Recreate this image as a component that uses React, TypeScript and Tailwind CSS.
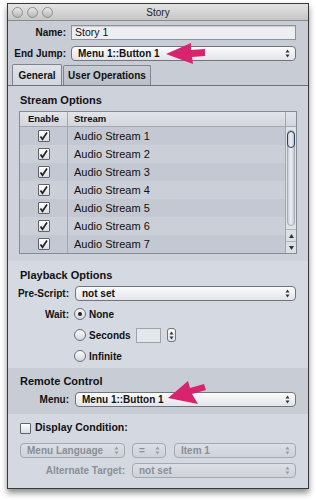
import React from "react";

const F = { fontFamily: '"Liberation Sans", Arial, sans-serif' };

function UpDown({ color = "#333" }: { color?: string }) {
  return (
    <svg width="5" height="9" viewBox="0 0 5 9" className="shrink-0">
      <polygon points="2.5,0.5 4.5,3.5 0.5,3.5" fill={color} />
      <polygon points="2.5,8.5 4.5,5.5 0.5,5.5" fill={color} />
    </svg>
  );
}

function Popup({ text, disabled, className }: { text: string; disabled?: boolean; className?: string }) {
  return (
    <div
      className={
        "h-[15px] rounded-[4px] border flex items-center pl-[6px] pr-[5px] justify-between bg-gradient-to-b " +
        (disabled
          ? "border-[#a4a8b0] from-[#dcdfe5] to-[#ced2d9] text-[#8b8f97] font-normal "
          : "border-[#6f747d] from-[#fbfbfc] to-[#e3e5ea] text-[#111] font-bold ") +
        (className || "")
      }
    >
      <span className={"text-[10px] leading-none " + (disabled ? "font-bold" : "")}>{text}</span>
      <UpDown color={disabled ? "#9a9ea6" : "#333"} />
    </div>
  );
}

function Check({ checked }: { checked?: boolean }) {
  return (
    <div className="w-[12px] h-[12px] border border-[#5f636b] bg-gradient-to-b from-[#ffffff] to-[#d9dce2] rounded-[1px] flex items-center justify-center">
      {checked && (
        <svg width="9" height="9" viewBox="0 0 9 9">
          <path d="M1.5 4.5 L3.5 7.2 L8 0.5" stroke="#222" strokeWidth="1.7" fill="none" />
        </svg>
      )}
    </div>
  );
}

function Radio({ on }: { on?: boolean }) {
  return (
    <div className="w-[12px] h-[12px] rounded-full border border-[#6b7079] bg-gradient-to-b from-[#fdfdfd] to-[#d3d6dc] flex items-center justify-center">
      {on && <div className="w-[4px] h-[4px] rounded-full bg-[#222]" />}
    </div>
  );
}

function Light() {
  return <div className="w-[11px] h-[11px] rounded-full border border-[#8e8e8e] bg-gradient-to-b from-[#e8e8e8] to-[#b7b7b7]" />;
}

export default function App() {
  const streams = [1, 2, 3, 4, 5, 6, 7];
  return (
    <div className="relative w-[316px] h-[500px] bg-white overflow-hidden" style={F}>
      <div className="ml-[7px] mt-[3px] w-[302px] border border-[#3a3a3a] shadow-[0_4px_6px_rgba(0,0,0,0.45)] text-[#111]">
        {/* title bar */}
        <div className="relative h-[17px] bg-gradient-to-b from-[#e4e4e4] to-[#c6c6c6] border-b border-[#8a8a8a] flex items-center">
          <div className="flex gap-[4px] pl-[4px]">
            <Light />
            <Light />
            <Light />
          </div>
          <div className="absolute inset-0 flex items-center justify-center text-[10px] text-[#222]">Story</div>
        </div>

        {/* top area */}
        <div className="bg-[#c8ccd5] pt-[4px]">
          <div className="flex items-center h-[15px]">
            <div className="w-[58px] text-right text-[10px] font-bold">Name:</div>
            <div className="ml-[5px] w-[225px] h-[15px] border border-[#8d9199] bg-[#eceef2] flex items-center pl-[3px] text-[10.5px] shadow-[inset_0_1px_1px_rgba(0,0,0,0.15)]">
              Story 1
            </div>
          </div>
          <div className="flex items-center h-[15px] mt-[6px]">
            <div className="w-[58px] text-right text-[10px] font-bold">End Jump:</div>
            <Popup text="Menu 1::Button 1" className="ml-[5px] w-[225px]" />
          </div>
          <div className="flex mt-[4px] pl-[4px] h-[21px] items-end border-b border-[#6d717a]">
            <div className="h-[21px] w-[50px] border border-b-0 border-[#80848c] bg-gradient-to-b from-[#dfe2e8] to-[#d2d6de] rounded-t-[2px] flex items-center justify-center text-[10px] font-bold">
              General
            </div>
            <div className="h-[20px] w-[88px] ml-[1px] border border-b-0 border-[#80848c] bg-gradient-to-b from-[#c8ccd4] to-[#bbbfc8] rounded-t-[2px] flex items-center justify-center text-[10px] font-bold">
              User Operations
            </div>
          </div>
        </div>

        {/* Stream Options */}
        <div className="bg-[#ced2da] pt-[8px] pb-[7px]">
          <div className="ml-[12px] h-[12px] text-[11px] font-bold leading-[12px]">Stream Options</div>
          <div className="ml-[11px] mt-[5px] w-[278px] border border-[#878b94] flex">
            <div className="flex-1">
              <div className="h-[15px] flex bg-gradient-to-b from-[#e2e5ea] to-[#d2d5dc] border-b border-[#a3a7af] text-[9.5px] font-bold">
                <div className="w-[48px] border-r border-[#a3a7af] flex items-center justify-center">Enable</div>
                <div className="flex-1 flex items-center pl-[6px]">Stream</div>
              </div>
              {streams.map((n) => (
                <div key={n} className={"h-[18px] flex " + (n % 2 ? "bg-[#c3c8d2]" : "bg-[#cbcfd8]")}>
                  <div className="w-[48px] border-r border-[#a3a7af] flex items-center justify-center">
                    <Check checked />
                  </div>
                  <div className="flex-1 flex items-center pl-[6px] text-[11px]">Audio Stream {n}</div>
                </div>
              ))}
            </div>
            <div className="w-[11px] border-l border-[#a3a7af] flex flex-col">
              <div className="h-[15px] bg-gradient-to-b from-[#e2e5ea] to-[#d2d5dc] border-b border-[#a3a7af]" />
              <div className="flex-1 bg-[#dfe2e7] relative">
                <div className="absolute left-[1px] top-[3px] w-[8px] h-[96px] rounded-full bg-gradient-to-r from-[#c9cdd4] via-[#eef0f3] to-[#c3c7cf] border border-[#a9adb5]" />
                <div className="absolute left-[1px] top-[4px] w-[8px] h-[17px] rounded-full border-[1.5px] border-[#2c3e62]" />
              </div>
              <div className="h-[12px] flex items-center justify-center border-t border-[#b0b4bb] bg-[#dcdfe4]">
                <svg width="5" height="4" viewBox="0 0 5 4"><polygon points="2.5,0 5,4 0,4" fill="#333" /></svg>
              </div>
              <div className="h-[12px] flex items-center justify-center border-t border-[#b0b4bb] bg-[#dcdfe4]">
                <svg width="5" height="4" viewBox="0 0 5 4"><polygon points="0,0 5,0 2.5,4" fill="#333" /></svg>
              </div>
            </div>
          </div>
        </div>

        {/* Playback Options */}
        <div className="bg-[#d5d9e1] pt-[8px] pb-[5px]">
          <div className="ml-[12px] h-[12px] text-[11px] font-bold leading-[12px]">Playback Options</div>
          <div className="flex items-center h-[15px] mt-[5px]">
            <div className="w-[61px] text-right text-[10px] font-bold">Pre-Script:</div>
            <Popup text="not set" className="ml-[6px] w-[221px]" />
          </div>
          <div className="flex items-center h-[14px] mt-[6px]">
            <div className="w-[61px] text-right text-[10px] font-bold">Wait:</div>
            <div className="ml-[5px] flex items-center gap-[3px]">
              <Radio on />
              <span className="text-[10px] font-bold">None</span>
            </div>
          </div>
          <div className="flex items-center h-[14px] mt-[7px]">
            <div className="w-[61px]" />
            <div className="ml-[5px] flex items-center gap-[3px]">
              <Radio />
              <span className="text-[10px] font-bold">Seconds</span>
              <div className="ml-[2px] w-[25px] h-[15px] border border-[#9ea2aa] bg-[#e3e6eb]" />
              <div className="ml-[3px] w-[9px] h-[14px] rounded-[3px] border border-[#6f747d] bg-gradient-to-b from-[#fbfbfc] to-[#e0e3e8] flex items-center justify-center">
                <UpDown />
              </div>
            </div>
          </div>
          <div className="flex items-center h-[14px] mt-[7px]">
            <div className="w-[61px]" />
            <div className="ml-[5px] flex items-center gap-[3px]">
              <Radio />
              <span className="text-[10px] font-bold">Infinite</span>
            </div>
          </div>
        </div>

        {/* Remote Control */}
        <div className="bg-[#c8ccd5] pt-[7px] pb-[7px]">
          <div className="ml-[12px] h-[12px] text-[11px] font-bold leading-[12px]">Remote Control</div>
          <div className="flex items-center h-[15px] mt-[5px]">
            <div className="w-[61px] text-right text-[10px] font-bold">Menu:</div>
            <Popup text="Menu 1::Button 1" className="ml-[6px] w-[221px]" />
          </div>
        </div>

        {/* Display Condition */}
        <div className="bg-[#d4d8e0] pt-[8px] pb-[10px]">
          <div className="flex items-center h-[12px] ml-[12px] gap-[4px]">
            <div className="w-[11px] h-[11px] border border-[#5f636b] bg-gradient-to-b from-[#ffffff] to-[#d9dce2] rounded-[1px]" />
            <span className="text-[10.5px] font-bold">Display Condition:</span>
          </div>
          <div className="flex items-center h-[15px] mt-[9px] ml-[12px]">
            <Popup text="Menu Language" disabled className="w-[105px]" />
            <Popup text="=" disabled className="ml-[7px] w-[34px]" />
            <Popup text="Item 1" disabled className="ml-[8px] w-[122px]" />
          </div>
          <div className="flex items-center h-[15px] mt-[5px]">
            <div className="w-[117px] text-right text-[10px] font-bold text-[#8b8f97]">Alternate Target:</div>
            <Popup text="not set" disabled className="ml-[7px] w-[164px]" />
          </div>
        </div>
      </div>

      {/* annotation arrows */}
      <svg className="absolute left-0 top-0 pointer-events-none" width="316" height="500">
        <polygon points="166,54 191,43 191,50 205,49 205,56 192,57 193,64" fill="#d8246f" />
        <polygon points="168,398 188,381 190,388 204,384 206,390 192,394 198,404" fill="#d8246f" />
      </svg>
    </div>
  );
}
